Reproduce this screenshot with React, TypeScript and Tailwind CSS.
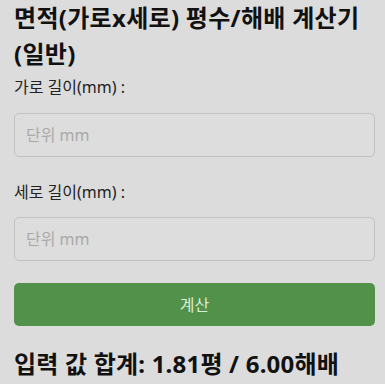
export default function App() {
  const font = { fontFamily: '"Noto Sans", "Noto Sans CJK KR", sans-serif' };
  return (
    <div className="w-[385px] h-[384px] overflow-hidden bg-[#dcdcdc] text-[#111]" style={font}>
      <div className="pl-[14px] pr-[10px]">
        <h1 className="text-[24px] font-bold leading-[36px] tracking-[0.3px]">
          면적(가로x세로) 평수/해배 계산기 (일반)
        </h1>
        <label className="block mt-[4px] text-[16px] leading-[22px] text-[#222]">가로 길이(mm) :</label>
        <input
          className="mt-[15px] block w-full h-[44px] rounded-[5px] border border-[#c2c2c2] bg-[#dddddd] px-[11px] text-[16px] placeholder:text-[#a9a9a9] outline-none"
          placeholder="단위 mm"
        />
        <label className="block mt-[24px] text-[16px] leading-[22px] text-[#222]">세로 길이(mm) :</label>
        <input
          className="mt-[14px] block w-full h-[44px] rounded-[5px] border border-[#c2c2c2] bg-[#dddddd] px-[11px] text-[16px] placeholder:text-[#a9a9a9] outline-none"
          placeholder="단위 mm"
        />
        <button className="mt-[22px] block w-full h-[43px] rounded-[5px] bg-[#52914a] text-[16px] text-[#dbecd8]">
          계산
        </button>
        <div className="mt-[20px] text-[24px] font-bold leading-[36px] tracking-[0.2px]">입력 값 합계: 1.81평 / 6.00해배</div>
      </div>
    </div>
  );
}
